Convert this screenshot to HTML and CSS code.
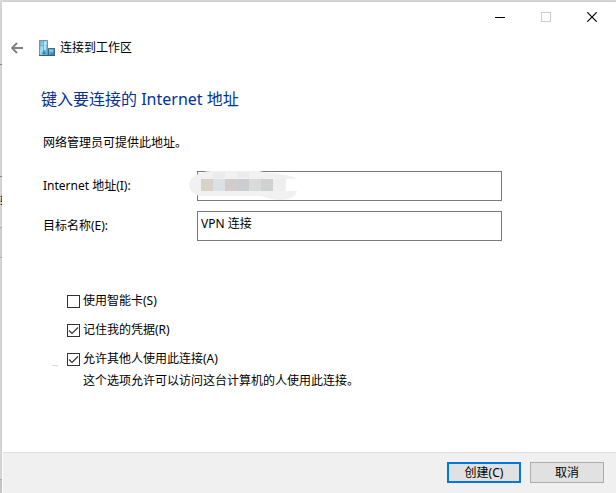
FILE: index.html
```html
<!DOCTYPE html>
<html lang="zh-CN">

<head>
    <meta charset="UTF-8">
    <meta name="viewport" content="width=device-width, initial-scale=1.0">
    <title>连接到工作区</title>
    <link rel="stylesheet" href="styles.css">
</head>

<body>
    <aside class="backdrop" aria-hidden="true">
        <div class="pane pane-top"></div>
        <div class="pane pane-middle"></div>
        <div class="pane pane-label">输</div>
        <div class="pane pane-item"></div>
        <div class="pane pane-rest"></div>
        <div class="pane pane-bottom"></div>
    </aside>

    <form class="window">
        <div class="titlebar">
            <button type="button" class="caption-button" aria-label="最小化">
                <svg width="10" height="10" viewBox="0 0 10 10" shape-rendering="crispEdges"><path d="M0 5h10v1H0z" fill="#000"/></svg>
            </button>
            <button type="button" class="caption-button" aria-label="最大化" disabled>
                <svg width="10" height="10" viewBox="0 0 10 10"><rect x=".5" y=".5" width="9" height="9" fill="none" stroke="#ccc"/></svg>
            </button>
            <button type="button" class="caption-button" aria-label="关闭">
                <svg width="10" height="10" viewBox="0 0 10 10"><path d="M.3.3l9.4 9.4M9.7.3L.3 9.7" stroke="#000" stroke-width="1.2"/></svg>
            </button>
        </div>

        <header class="header">
            <button type="button" class="back-button" aria-label="返回">
                <svg width="12" height="12" viewBox="0 0 12 12"><path d="M6 .9L1.2 6 6 11.1M1.4 6H12" fill="none" stroke="#808080" stroke-width="2"/></svg>
            </button>
            <svg class="app-icon" width="16" height="16" viewBox="0 0 16 16">
                <defs>
                    <linearGradient id="tower" x1="0" y1="0" x2="1" y2="1">
                        <stop offset="0" stop-color="#5e9fc3"/>
                        <stop offset=".45" stop-color="#a5dcf3"/>
                        <stop offset="1" stop-color="#4a93bb"/>
                    </linearGradient>
                    <linearGradient id="annex" x1="0" y1="0" x2="1" y2="1">
                        <stop offset="0" stop-color="#9ccfe2"/>
                        <stop offset="1" stop-color="#24688f"/>
                    </linearGradient>
                </defs>
                <path d="M0 0h9v16H0z" fill="url(#tower)"/>
                <path d="M.5.5h8v15h-8z" fill="none" stroke="#5b9cbd"/>
                <path d="M4.5 1v14M1 5.5h7" stroke="#5b9dbf" stroke-width=".6"/>
                <path d="M3 14l2-4 2 4z" fill="#3a83aa"/>
                <path d="M5 2h2v8H5z" fill="#c5ecfa" opacity=".7"/>
                <path d="M9 8h7v8H9z" fill="url(#annex)"/>
                <path d="M9.5 8.5h6v7h-6z" fill="none" stroke="#356e8c"/>
                <path d="M11 10h3v2h-3z" fill="#8cc5db"/>
                <path d="M0 15h16v1H0z" fill="#1f628b"/>
            </svg>
            <span class="app-title">连接到工作区</span>
        </header>

        <main class="content">
            <h1>键入要连接的 Internet 地址</h1>
            <p class="intro">网络管理员可提供此地址。</p>

            <div class="fields">
                <label for="address">Internet 地址(I):</label>
                <div class="field">
                    <input type="text" id="address">
                    <svg class="mask" width="110" height="30" viewBox="0 0 110 30" aria-hidden="true">
                        <path d="M12 2Q16 0 22 0H70Q79 2 92 3Q105 5 107 8H97V20H108Q107 28 91 29Q83 29 72 25H12Q1 23 0 14Q0 6 12 2z" fill="#f1f1f1"/>
                        <path d="M24 1h12v6H24zM48 1h12v6H48z" fill="#ebebeb"/>
                        <g shape-rendering="crispEdges">
                            <path d="M12 8h12v12H12z" fill="#d8d2cb"/>
                            <path d="M24 8h12v12H24z" fill="#dae0e3"/>
                            <path d="M36 8h12v12H36z" fill="#d2cccc"/>
                            <path d="M48 8h12v12H48z" fill="#cccdd0"/>
                            <path d="M60 8h12v12H60z" fill="#dadada"/>
                            <path d="M72 8h12v12H72z" fill="#d0d2d1"/>
                            <path d="M84 8h12v12H84z" fill="#eee"/>
                        </g>
                    </svg>
                </div>
                <label for="name">目标名称(E):</label>
                <div class="field">
                    <input type="text" id="name" value="VPN 连接">
                </div>
            </div>

            <div class="options">
                <label class="option"><input type="checkbox">使用智能卡(S)</label>
                <label class="option"><input type="checkbox" checked>记住我的凭据(R)</label>
                <div class="share">
                    <label class="option"><input type="checkbox" checked aria-describedby="share-note">允许其他人使用此连接(A)</label>
                    <p class="note" id="share-note">这个选项允许可以访问这台计算机的人使用此连接。</p>
                    <svg class="smudge" width="6" height="2" viewBox="0 0 6 2" aria-hidden="true"><path d="M0 0h6v2L4 1H0z" fill="#ddd"/></svg>
                </div>
            </div>
        </main>

        <footer class="footer">
            <button type="submit" class="button primary">创建(C)</button>
            <button type="button" class="button">取消</button>
        </footer>
    </form>
</body>

</html>
```
FILE: styles.css
```css
* {
    box-sizing: border-box;
}

body {
    margin: 0;
    min-height: 100vh;
    display: flex;
    padding-top: 2px;
    background-color: #dcdcdc;
    color: #000;
    font-family: "Noto Sans", "Noto Sans CJK SC", sans-serif;
    font-size: 12px;
    line-height: 16px;
}

h1,
p {
    margin: 0;
}

button,
input {
    font: inherit;
    color: inherit;
}

svg {
    display: block;
}

/* strip of the window behind the dialog */
.backdrop {
    width: 2px;
    flex: none;
    display: flex;
    flex-direction: column;
    overflow: hidden;
}

.pane {
    border-bottom: 1px solid #b4b4b4;
}

.pane-top {
    height: 63px;
    border-color: #888;
}

.pane-middle {
    height: 112px;
    border-color: #888;
}

.pane-label {
    height: 51px;
    padding-top: 17px;
}

.pane-item {
    height: 30px;
    background-color: #d4d4d4;
}

.pane-rest {
    flex: 1;
}

.pane-bottom {
    height: 13px;
    border: none;
    background-color: #ccc;
}

.window {
    flex: 1;
    display: flex;
    flex-direction: column;
    background-color: #fff;
    box-shadow: 0 0 3px rgba(0, 0, 0, 0.15);
}

.titlebar {
    display: flex;
    justify-content: flex-end;
    padding-right: 1px;
}

.caption-button {
    width: 46px;
    height: 30px;
    padding: 0;
    border: none;
    background: none;
    display: flex;
    justify-content: center;
    align-items: center;
}

.header {
    display: flex;
    align-items: center;
    height: 32px;
    padding-left: 9px;
}

.back-button {
    padding: 0;
    border: none;
    background: none;
}

.app-icon {
    margin-left: 16px;
}

.app-title {
    margin-left: 5px;
}

.content {
    flex: 1;
    padding: 23px 114px 24px 41px;
}

h1 {
    margin-left: -2px;
    color: #003399;
    font-size: 16px;
    font-weight: normal;
    line-height: 24px;
}

.intro {
    margin-top: 24px;
}

.fields {
    display: grid;
    grid-template-columns: 154px 1fr;
    row-gap: 10px;
    align-items: center;
    margin-top: 20px;
}

.field {
    position: relative;
}

.field input {
    display: block;
    width: 100%;
    height: 30px;
    padding: 0 3px 6px;
    border: 1px solid #7a7a7a;
    border-radius: 0;
    background-color: #fff;
    outline: none;
}

.mask {
    position: absolute;
    top: 0;
    left: -8px;
}

.options {
    display: flex;
    flex-direction: column;
    gap: 13px;
    margin: 52px 0 0 24px;
}

.option {
    display: flex;
    align-items: center;
    gap: 3px;
}

.option input {
    appearance: none;
    width: 13px;
    height: 13px;
    margin: 0;
    border: 1px solid #333;
    background-color: #fff;
}

.option input:checked {
    background-image: url("data:image/svg+xml,%3Csvg xmlns='http://www.w3.org/2000/svg' viewBox='0 0 11 11'%3E%3Cpath d='M1 5.5l3 3L10 2.5' fill='none' stroke='%23333' stroke-width='1.2'/%3E%3C/svg%3E");
}

.share {
    position: relative;
}

.note {
    margin: 6px 0 0 16px;
}

.smudge {
    position: absolute;
    top: 14px;
    left: -15px;
}

.footer {
    display: flex;
    justify-content: flex-end;
    gap: 9px;
    margin-left: 1px;
    padding: 9px 12px 10px;
    border-top: 1px solid #dfdfdf;
    background-color: #f0f0f0;
}

.button {
    width: 74px;
    height: 21px;
    padding: 0;
    border: 1px solid #adadad;
    background-color: #e1e1e1;
    line-height: 16px;
}

.primary {
    border: 2px solid #0078d7;
}
```
